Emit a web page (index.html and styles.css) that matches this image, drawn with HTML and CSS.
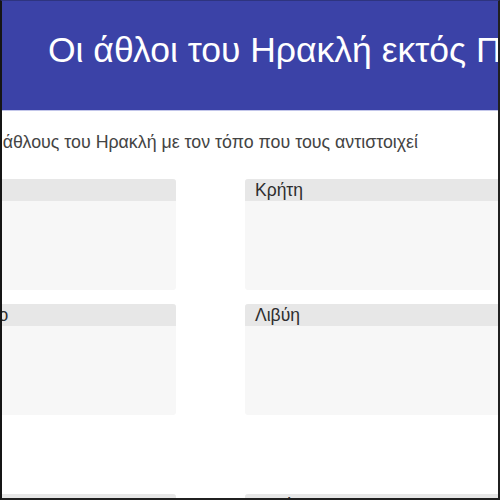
FILE: index.html
```html
<!DOCTYPE html>
<html lang="el">
<head>
<meta charset="utf-8">
<title>Οι άθλοι του Ηρακλή εκτός Πελοποννήσου</title>
<link rel="stylesheet" href="styles.css">
</head>
<body>
<div class="frame">
  <header class="banner">
    <h1 class="title">Οι άθλοι του Ηρακλή εκτός Πελοποννήσου</h1>
  </header>
  <main class="content">
    <div class="instructions"><span>Αντιστοίχισε τους άθλους του Ηρακλή με τον τόπο που τους αντιστοιχεί</span></div>
    <div class="grid">
      <section class="card"><div class="card-head">Θράκη</div><div class="card-body"></div></section>
      <section class="card"><div class="card-head">Κρήτη</div><div class="card-body"></div></section>
      <section class="card"><div class="card-head">Ταίναρο</div><div class="card-body"></div></section>
      <section class="card"><div class="card-head">Λιβύη</div><div class="card-body"></div></section>
      <section class="card"><div class="card-head">Ερύθεια</div><div class="card-body"></div></section>
      <section class="card"><div class="card-head">Θεμίσκυρα</div><div class="card-body"></div></section>
    </div>
  </main>
</div>
</body>
</html>
```
FILE: styles.css
```css
html, body {
  margin: 0;
  padding: 0;
  background: #ffffff;
}
body {
  width: 500px;
  height: 500px;
  overflow: hidden;
  font-family: "Liberation Sans", Arial, Helvetica, sans-serif;
}
.frame {
  box-sizing: border-box;
  width: 500px;
  height: 500px;
  overflow: hidden;
  border-left: 2px solid #151515;
  border-right: 2px solid #202020;
  border-bottom: 2px solid #202020;
  border-top: 1px solid #2e347f;
  background: #ffffff;
}
.banner {
  height: 110px;
  background: #3b42a7;
  border-bottom: 1px solid #c3c6ea;
  display: flex;
  align-items: center;
  box-sizing: border-box;
  padding: 0 0 10px 46px;
  overflow: hidden;
}
.title {
  margin: 0;
  color: #ffffff;
  font-weight: normal;
  font-size: 35.5px;
  white-space: nowrap;
}
.content {
  padding-top: 22px;
}
.instructions {
  width: 416px;
  display: flex;
  justify-content: flex-end;
  white-space: nowrap;
  color: #444444;
  font-size: 17.8px;
  line-height: 18px;
}
.grid {
  margin: 28px -60px 0 -65px;
  display: grid;
  grid-template-columns: 239px 1fr;
  column-gap: 69px;
  row-gap: 14px;
}
.card {
  border-radius: 3px;
  overflow: hidden;
  background: #f7f7f7;
}
.card-head {
  background: #e7e7e7;
  height: 22px;
  line-height: 22px;
  padding-left: 10px;
  font-size: 17.5px;
  color: #2e2e2e;
}
.card-body {
  height: 89px;
}
.card:nth-child(n+5) {
  margin-top: 65px;
}
```
